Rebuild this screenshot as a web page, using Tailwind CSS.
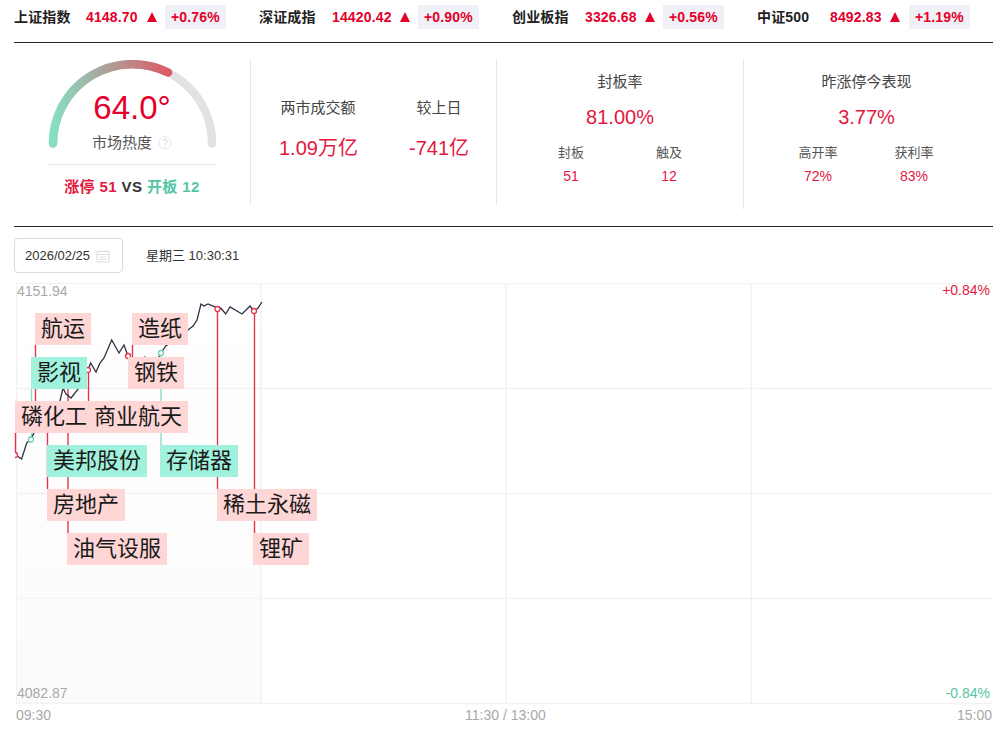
<!DOCTYPE html>
<html lang="zh-CN">
<head>
  <meta charset="UTF-8" />
  <title>市场热度</title>
  <script src="https://cdn.jsdelivr.net/npm/@tailwindcss/browser@4"></script>
</head>
<body class="bg-white font-['Liberation_Sans','Noto_Sans_CJK_SC',sans-serif] text-[#333]">
  <div class="px-[14px] pr-[15px] h-[735px] overflow-hidden">

    <!-- index bar -->
    <div class="grid grid-cols-[245px_253px_245px_1fr] h-[43px] border-b border-[#222] pt-[5px] text-[14px] font-bold tracking-[0.15px]">
      <div class="flex items-center h-6 text-[#e4002b]">
        <span class="text-[#222] w-[72px]">上证指数</span><span class="w-[61px]">4148.70</span><svg class="w-[18px]" width="18" height="10" viewBox="0 0 18 10"><path d="M0 10L5 0L10 10Z" fill="#e4002b" /></svg><span class="bg-[#f0f1f6] h-6 leading-6 px-[6px]">+0.76%</span>
      </div>
      <div class="flex items-center h-6 text-[#e4002b]">
        <span class="text-[#222] w-[73px]">深证成指</span><span class="w-[68px]">14420.42</span><svg class="w-[18px]" width="18" height="10" viewBox="0 0 18 10"><path d="M0 10L5 0L10 10Z" fill="#e4002b" /></svg><span class="bg-[#f0f1f6] h-6 leading-6 px-[6px]">+0.90%</span>
      </div>
      <div class="flex items-center h-6 text-[#e4002b]">
        <span class="text-[#222] w-[73px]">创业板指</span><span class="w-[60px]">3326.68</span><svg class="w-[18px]" width="18" height="10" viewBox="0 0 18 10"><path d="M0 10L5 0L10 10Z" fill="#e4002b" /></svg><span class="bg-[#f0f1f6] h-6 leading-6 px-[6px]">+0.56%</span>
      </div>
      <div class="flex items-center h-6 text-[#e4002b]">
        <span class="text-[#222] w-[73px]">中证500</span><span class="w-[60px]">8492.83</span><svg class="w-[19px]" width="19" height="10" viewBox="0 0 19 10"><path d="M0 10L5 0L10 10Z" fill="#e4002b" /></svg><span class="bg-[#f0f1f6] h-6 leading-6 px-[6px]">+1.19%</span>
      </div>
    </div>

    <!-- stats -->
    <div class="flex h-[184px] border-b border-[#222] pt-[17px]">
      <div class="w-[237px] shrink-0 h-[145px] border-r border-[#e4e6ec] pr-[33px] pl-[33px]">
        <div class="relative h-[88px]">
          <svg class="absolute left-0 top-0" width="172" height="92" viewBox="0 0 172 92">
            <defs>
              <linearGradient id="heat" x1="0" y1="0" x2="1" y2="0">
                <stop offset="0" stop-color="#86dfc2" />
                <stop offset="1" stop-color="#db5a68" />
              </linearGradient>
            </defs>
            <path d="M6 83.5 A79.5 79.5 0 0 1 165 83.5" fill="none" stroke="#e2e2e2" stroke-width="8.5" stroke-linecap="round" />
            <path d="M6 83.5 A79.5 79.5 0 0 1 121 12.5" fill="none" stroke="url(#heat)" stroke-width="8.5" stroke-linecap="round" />
          </svg>
          <div class="absolute top-[28px] left-0 w-full text-center text-[33px] leading-[40px] text-[#e4002b]">64.0°</div>
          <div class="absolute top-[73px] left-0 w-full flex justify-center items-center gap-[6px] text-[15px] leading-5 text-[#555]">
            <span>市场热度</span>
            <svg width="14" height="14" viewBox="0 0 14 14"><circle cx="7" cy="7" r="6" fill="none" stroke="#e6e6e6" stroke-width="1" /><text x="7" y="10.5" text-anchor="middle" font-size="10" fill="#d8d8d8">?</text></svg>
          </div>
        </div>
        <div class="mt-[16px] border-t border-[#e6e6ea] pt-[5px] text-center text-[15px] leading-[34px] font-bold tracking-[0.4px] text-[#333] w-[170px]">
          <span class="text-[#e4173e]">涨停 51</span> VS <span class="text-[#56c5a5]">开板 12</span>
        </div>
      </div>

      <div class="w-[246px] shrink-0 h-[145px] border-r border-[#e4e6ec] flex pl-[28px] pt-[38px] text-[15px]">
        <div class="w-[78px] text-center">
          <div class="leading-5 text-[#444]">两市成交额</div>
          <div class="mt-[18px] text-[20px] leading-6 text-[#e4173e] whitespace-nowrap">1.09万亿</div>
        </div>
        <div class="ml-[52px] w-[60px] text-center">
          <div class="leading-5 text-[#444]">较上日</div>
          <div class="mt-[18px] text-[20px] leading-6 text-[#e4173e] whitespace-nowrap">-741亿</div>
        </div>
      </div>

      <div class="w-[247px] shrink-0 h-[149px] border-r border-[#e4e6ec] text-center pt-[12px]">
        <div class="text-[15px] leading-5 text-[#444]">封板率</div>
        <div class="mt-[13px] text-[20px] leading-6 text-[#e4173e]">81.00%</div>
        <div class="flex mt-[14px] pl-[38px] text-[13px]">
          <div class="w-[72px]"><div class="leading-5 text-[#555]">封板</div><div class="mt-[3px] text-[14px] leading-5 text-[#e4173e]">51</div></div>
          <div class="ml-[26px] w-[72px]"><div class="leading-5 text-[#555]">触及</div><div class="mt-[3px] text-[14px] leading-5 text-[#e4173e]">12</div></div>
        </div>
      </div>

      <div class="w-[245px] shrink-0 text-center pt-[12px]">
        <div class="text-[15px] leading-5 text-[#444]">昨涨停今表现</div>
        <div class="mt-[13px] text-[20px] leading-6 text-[#e4173e]">3.77%</div>
        <div class="flex mt-[14px] pl-[38px] text-[13px]">
          <div class="w-[72px]"><div class="leading-5 text-[#555]">高开率</div><div class="mt-[3px] text-[14px] leading-5 text-[#e4173e]">72%</div></div>
          <div class="ml-[24px] w-[72px]"><div class="leading-5 text-[#555]">获利率</div><div class="mt-[3px] text-[14px] leading-5 text-[#e4173e]">83%</div></div>
        </div>
      </div>
    </div>

    <!-- date row -->
    <div class="flex items-center h-[56px] pt-[1px] text-[13px] text-[#333]">
      <div class="flex items-center h-[35px] w-[109px] border border-[#d9d9d9] rounded-[4px] pl-[10px] gap-[6px]">
        <span>2026/02/25</span>
        <svg width="14" height="14" viewBox="0 0 14 14" fill="none" stroke="#dcdcdc" stroke-width="1"><rect x="1" y="2.5" width="12" height="10.5" /><path d="M1 5.5H13M4 1V3.5M10 1V3.5M3.5 8H10.5M3.5 10.5H10.5" /></svg>
      </div>
      <span class="ml-[23px]">星期三 10:30:31</span>
    </div>

    <!-- chart: free canvas of markers and tags -->
    <div class="relative h-[452px] -mx-[14px]">
      <div class="absolute left-[16px] top-0 w-[245px] h-[420px] bg-gradient-to-b from-white to-[#fbfbfb]"></div>
      <svg class="absolute left-0 top-0" width="1008" height="452" viewBox="0 283 1008 452" fill="none">
        <g stroke="#f2f2f2" stroke-width="1.5">
          <path d="M16 283.5H993M16 388.5H993M16 493.5H993M16 598.5H993M16 703.5H993" />
          <path d="M16.5 283V703M261 283V703M506 283V703M751.5 283V703" />
        </g>
        <g stroke="#e8334f" stroke-width="1.4">
          <path d="M15.5 433V452M35.5 345V401M47.5 433V489M68 389V533M88.5 372V401M132.5 345V357M217.5 311V489M254.5 313V533" />
        </g>
        <path d="M31.5 389V437M161 356V445" stroke="#8fdcc4" stroke-width="1.4" />
        <path d="M15.6 455L21.6 459L26.7 443L31 439L40 420L50 410L60 401L63 388L66 394L71 398L79 388L88 370L90.6 363L96 372L100 363L104 358L111.7 340L119 353L124 345L128 356L135 362L143 358L145 357L150 362L157 360L161 353L165.7 346L178 338L188 330L193 326L197 320L201 304L204 306L208 304L217.7 308L220.7 308L225.7 314L230 307L242 314L250 306L254 311L258 308L262 302" stroke="#2e3142" stroke-width="1.3" />
        <g fill="#fff" stroke="#e8334f" stroke-width="1.3">
          <path d="M15 452.5A2.5 2.5 0 0 1 15 457.5" /><circle cx="88" cy="370" r="2.5" /><circle cx="128" cy="356" r="2.5" /><circle cx="217.5" cy="309" r="2.5" /><circle cx="254" cy="311" r="2.5" />
        </g>
        <g fill="#fff" stroke="#6fd2b4" stroke-width="1.3">
          <circle cx="31" cy="439.5" r="2.5" /><circle cx="161" cy="353" r="2.5" />
        </g>
      </svg>

      <span class="absolute left-[17px] top-[-2px] text-[14px] leading-5 text-[#a8a8a8]">4151.94</span>
      <span class="absolute right-[17px] top-[-3px] text-[14px] leading-5 text-[#e4173e]">+0.84%</span>
      <span class="absolute left-[17px] top-[400px] text-[14px] leading-5 text-[#a8a8a8]">4082.87</span>
      <span class="absolute right-[17px] top-[400px] text-[14px] leading-5 text-[#56c5a5]">-0.84%</span>
      <span class="absolute left-[16px] top-[422px] text-[14px] leading-5 text-[#a8a8a8]">09:30</span>
      <span class="absolute left-[465px] top-[422px] text-[14px] leading-5 text-[#a8a8a8]">11:30 / 13:00</span>
      <span class="absolute right-[15px] top-[422px] text-[14px] leading-5 text-[#a8a8a8]">15:00</span>

      <span class="absolute left-[35px] top-[30px] h-8 px-[6px] text-[22px] leading-8 bg-[#ffd6d6] text-[#1a1a1a]">航运</span>
      <span class="absolute left-[132px] top-[30px] h-8 px-[6px] text-[22px] leading-8 bg-[#ffd6d6] text-[#1a1a1a]">造纸</span>
      <span class="absolute left-[31px] top-[74px] h-8 px-[6px] text-[22px] leading-8 bg-[#a0f2dc] text-[#1a1a1a]">影视</span>
      <span class="absolute left-[128px] top-[74px] h-8 px-[6px] text-[22px] leading-8 bg-[#ffd6d6] text-[#1a1a1a]">钢铁</span>
      <span class="absolute left-[15px] top-[118px] h-8 px-[6px] text-[22px] leading-8 bg-[#ffd6d6] text-[#1a1a1a]">磷化工</span>
      <span class="absolute left-[88px] top-[118px] h-8 px-[6px] text-[22px] leading-8 bg-[#ffd6d6] text-[#1a1a1a]">商业航天</span>
      <span class="absolute left-[47px] top-[162px] h-8 px-[6px] text-[22px] leading-8 bg-[#a0f2dc] text-[#1a1a1a]">美邦股份</span>
      <span class="absolute left-[160px] top-[162px] h-8 px-[6px] text-[22px] leading-8 bg-[#a0f2dc] text-[#1a1a1a]">存储器</span>
      <span class="absolute left-[47px] top-[206px] h-8 px-[6px] text-[22px] leading-8 bg-[#ffd6d6] text-[#1a1a1a]">房地产</span>
      <span class="absolute left-[217px] top-[206px] h-8 px-[6px] text-[22px] leading-8 bg-[#ffd6d6] text-[#1a1a1a]">稀土永磁</span>
      <span class="absolute left-[67px] top-[250px] h-8 px-[6px] text-[22px] leading-8 bg-[#ffd6d6] text-[#1a1a1a]">油气设服</span>
      <span class="absolute left-[253px] top-[250px] h-8 px-[6px] text-[22px] leading-8 bg-[#ffd6d6] text-[#1a1a1a]">锂矿</span>
    </div>
  </div>
</body>
</html>
